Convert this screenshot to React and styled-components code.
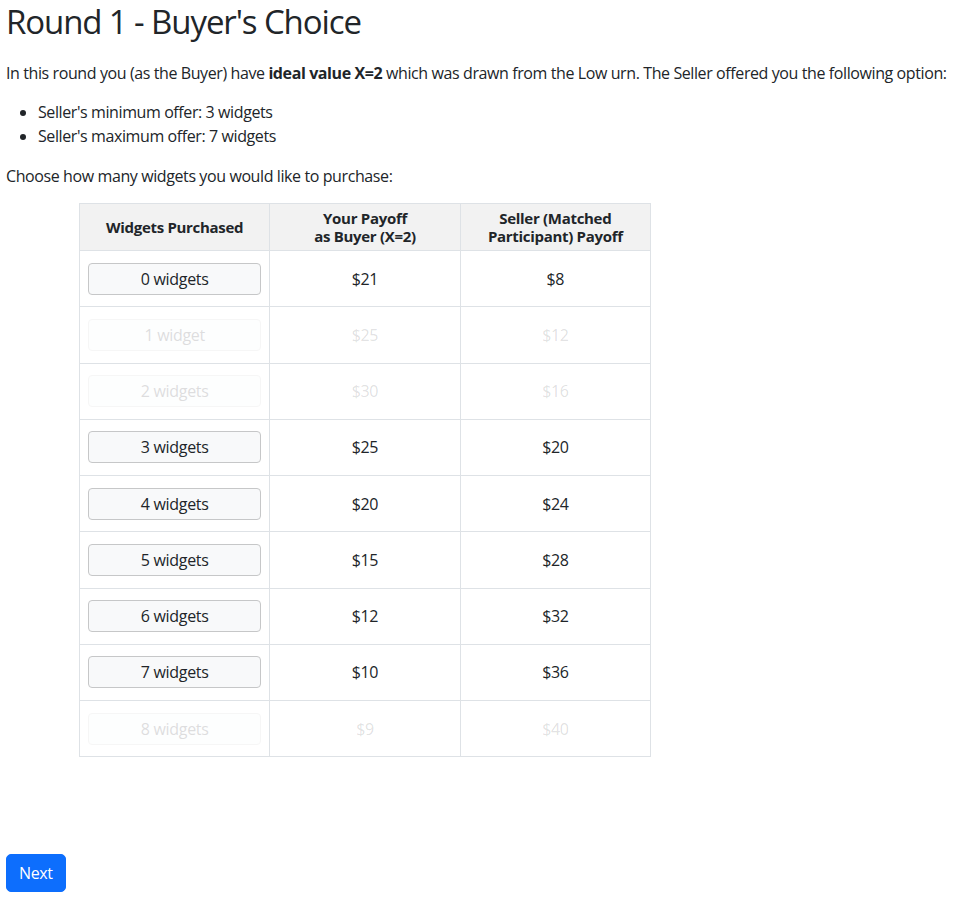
import React from "react";
import styled, { createGlobalStyle } from "styled-components";

const Global = createGlobalStyle`
  html, body { margin: 0; padding: 0; background: #fff; }
  body {
    font-family: "Open Sans", "Noto Sans", sans-serif;
    font-size: 16px;
    line-height: 24px;
    letter-spacing: -0.4px;
    color: #212529;
  }
`;

const Page = styled.div`
  padding: 0 6px;
  display: flex;
  flex-direction: column;
  min-height: 902px;
  box-sizing: border-box;
`;

const Title = styled.h1`
  font-size: 33px;
  font-weight: 400;
  letter-spacing: -1.1px;
  line-height: 42px;
  margin: 1px 0 18px;
`;

const Para = styled.p`
  margin: 0 0 15px;
`;

const List = styled.ul`
  margin: 0 0 16px;
  padding-left: 32px;
`;

const TableWrap = styled.div`
  padding-left: 73px;
`;

const Table = styled.table`
  border-collapse: collapse;
  width: 572px;
  table-layout: fixed;
`;

const Th = styled.th`
  background: #f2f2f2;
  border: 1px solid #dee2e6;
  font-size: 15px;
  line-height: 18px;
  font-weight: 700;
  letter-spacing: -0.3px;
  padding: 5px 8px;
  height: 36px;
  text-align: center;
`;

const Td = styled.td`
  border: 1px solid #dee2e6;
  height: 55.25px;
  padding: 0 8px;
  text-align: center;
  color: ${(p) => (p.$dim ? "rgba(33,37,41,0.15)" : "#212529")};
`;

const ChoiceButton = styled.button`
  width: 100%;
  height: 32px;
  font: inherit;
  font-size: 16px;
  letter-spacing: -0.32px;
  color: #212529;
  background: #f8f9fa;
  border: 1px solid #c6c7c8;
  border-radius: 4px;
  cursor: pointer;
  &:disabled {
    opacity: 0.15;
    cursor: default;
  }
`;

const Spacer = styled.div`
  flex: 1;
`;

const NextButton = styled.button`
  align-self: flex-start;
  font: inherit;
  letter-spacing: -0.4px;
  color: #fff;
  background: #0d6efd;
  border: 1px solid #0d6efd;
  border-radius: 5px;
  padding: 6px 12px;
  line-height: 24px;
  margin-bottom: 10px;
`;

const rows = [
  ["0 widgets", "$21", "$8", false],
  ["1 widget", "$25", "$12", true],
  ["2 widgets", "$30", "$16", true],
  ["3 widgets", "$25", "$20", false],
  ["4 widgets", "$20", "$24", false],
  ["5 widgets", "$15", "$28", false],
  ["6 widgets", "$12", "$32", false],
  ["7 widgets", "$10", "$36", false],
  ["8 widgets", "$9", "$40", true],
];

export default function App() {
  return (
    <>
      <Global />
      <Page>
        <Title>Round 1 - Buyer's Choice</Title>
        <Para>
          In this round you (as the Buyer) have <b>ideal value X=2</b> which was drawn from the Low urn. The Seller offered you the following option:
        </Para>
        <List>
          <li>Seller's minimum offer: 3 widgets</li>
          <li>Seller's maximum offer: 7 widgets</li>
        </List>
        <Para>Choose how many widgets you would like to purchase:</Para>
        <TableWrap>
          <Table>
            <thead>
              <tr>
                <Th>Widgets Purchased</Th>
                <Th>Your Payoff<br />as Buyer (X=2)</Th>
                <Th>Seller (Matched<br />Participant) Payoff</Th>
              </tr>
            </thead>
            <tbody>
              {rows.map(([label, buyer, seller, dim]) => (
                <tr key={label}>
                  <Td>
                    <ChoiceButton disabled={dim}>{label}</ChoiceButton>
                  </Td>
                  <Td $dim={dim}>{buyer}</Td>
                  <Td $dim={dim}>{seller}</Td>
                </tr>
              ))}
            </tbody>
          </Table>
        </TableWrap>
        <Spacer />
        <NextButton>Next</NextButton>
      </Page>
    </>
  );
}
